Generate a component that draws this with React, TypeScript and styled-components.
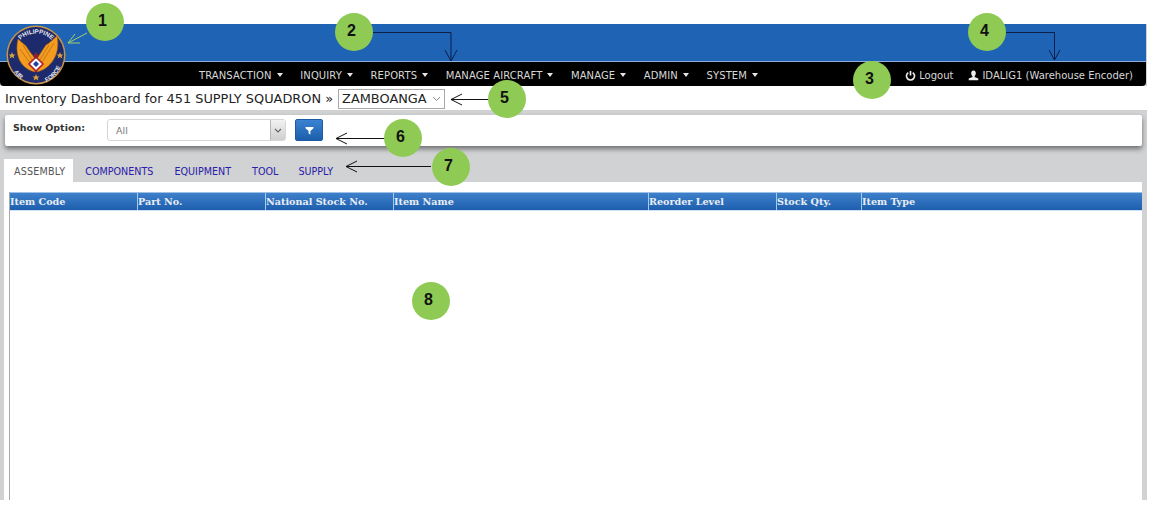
import React from "react";
import styled, { createGlobalStyle } from "styled-components";

const Global = createGlobalStyle`
  html, body { margin: 0; padding: 0; background: #fff; }
  body { font-family: "DejaVu Sans", Verdana, sans-serif; overflow: hidden; }
`;

const Page = styled.div`
  position: relative;
  width: 1149px;
  height: 513px;
  background: #fff;
  padding-top: 24px;
  box-sizing: border-box;
  overflow: hidden;
`;
const Frame = styled.div`
  width: 1147px;
  height: 476px;
  background: #d1d2d4;
  display: flex;
  flex-direction: column;
`;
const Banner = styled.div`
  height: 38px;
  background: #1f63b5;
  border-bottom: 1px solid #8fb0d8;
  box-sizing: border-box;
  margin-right: 1px;
`;
const NavBar = styled.nav`
  height: 24px;
  background: #000;
  border-radius: 0 0 4px 4px;
  margin-right: 1px;
  display: flex;
  align-items: center;
  justify-content: space-between;
  padding: 2px 13px 0 199px;
  box-sizing: border-box;
  font-size: 10px;
  color: #d8d8d8;
`;
const NavGroup = styled.div<{ $gap: number; $spacing?: number }>`
  display: flex;
  align-items: center;
  gap: ${(p) => p.$gap}px;
  letter-spacing: ${(p) => p.$spacing ?? 0}px;
`;
const NavItem = styled.span<{ $iconGap?: number }>`
  display: flex;
  align-items: center;
  gap: ${(p) => p.$iconGap ?? 5}px;
  white-space: nowrap;
`;
const Caret = styled.i`
  width: 0;
  height: 0;
  border-left: 3.5px solid transparent;
  border-right: 3.5px solid transparent;
  border-top: 4px solid #e6e6e6;
`;
const TitleRow = styled.div`
  height: 24px;
  background: #fff;
  display: flex;
  align-items: center;
  padding: 1px 0 0 5px;
  box-sizing: border-box;
  gap: 5px;
  font-size: 12.9px;
  color: #222;
  white-space: nowrap;
`;
const SiteSelect = styled.div`
  width: 107px;
  height: 20px;
  border: 1px solid #a9a9a9;
  box-sizing: border-box;
  display: flex;
  align-items: center;
  justify-content: space-between;
  padding: 0 3px;
  font-size: 12.9px;
  color: #222;
`;
const FilterCard = styled.div`
  height: 31px;
  margin: 5px 5px 0 5px;
  background: #fff;
  border-radius: 2px;
  box-shadow: 0 3px 5px rgba(60, 60, 60, 0.65);
  display: flex;
  align-items: flex-start;
  box-sizing: border-box;
  padding: 4px 0 0 8px;
`;
const FilterLabel = styled.span`
  width: 94px;
  font-size: 9.5px;
  font-weight: bold;
  color: #333;
  white-space: nowrap;
  padding-top: 3px;
`;
const OptionSelect = styled.div`
  width: 179px;
  height: 22px;
  border: 1px solid #d6d6d6;
  border-radius: 3px;
  box-sizing: border-box;
  display: flex;
  align-items: center;
  justify-content: space-between;
  padding-left: 8px;
  font-size: 9.5px;
  color: #777;
  background: #fff;
`;
const OptionArrow = styled.span`
  width: 14px;
  height: 20px;
  background: linear-gradient(#f2f2f2, #cfcfcf);
  border-left: 1px solid #b5b5b5;
  display: flex;
  align-items: center;
  justify-content: center;
`;
const FilterButton = styled.button`
  width: 28px;
  height: 22px;
  margin-left: 9px;
  border: 1px solid #1c5aa6;
  border-radius: 2px;
  background: linear-gradient(#3a83d2, #1c5eab);
  padding: 0;
  display: flex;
  align-items: center;
  justify-content: center;
`;
const TabStrip = styled.div`
  display: flex;
  align-items: stretch;
  height: 23px;
  margin: 13px 0 0 4px;
  font-size: 9.6px;
`;
const Tab = styled.span<{ $active?: boolean; $left: number; $right: number }>`
  display: flex;
  align-items: center;
  padding: 2px ${(p) => p.$right}px 0 ${(p) => p.$left}px;
  white-space: nowrap;
  color: ${(p) => (p.$active ? "#555" : "#2a20a8")};
  background: ${(p) => (p.$active ? "#fff" : "transparent")};
  letter-spacing: ${(p) => (p.$active ? 0.2 : 0)}px;
`;
const Panel = styled.div`
  flex: 1;
  margin: 0 5px 0 4px;
  background: #fff;
  padding: 10px 0 0 6px;
  display: flex;
`;
const TableBox = styled.div`
  flex: 1;
  border-left: 1px solid #a8a8a8;
  margin-left: -1px;
`;
const HeadRow = styled.div`
  height: 19px;
  display: flex;
  background: linear-gradient(#3f80cb, #1d5fae);
  border-top: 1px solid #9fc0e6;
  border-bottom: 1px solid #cfe0f2;
  box-sizing: border-box;
`;
const HeadCell = styled.div<{ $w?: number }>`
  ${(p) => (p.$w ? `width: ${p.$w}px;` : "flex: 1;")}
  box-sizing: border-box;
  border-left: 1px solid #a9c8ea;
  font-family: "DejaVu Serif", serif;
  font-size: 9.6px;
  font-weight: bold;
  color: #e8eef6;
  line-height: 17px;
  white-space: nowrap;
  &:first-child { border-left: 0; }
`;
const Callout = styled.div<{ $x: number; $y: number }>`
  position: absolute;
  left: ${(p) => p.$x - 19}px;
  top: ${(p) => p.$y - 19}px;
  width: 38px;
  height: 38px;
  padding: 0 5px 2px 0;
  box-sizing: border-box;
  border-radius: 50%;
  background: #8fcb54;
  display: flex;
  align-items: center;
  justify-content: center;
  font-family: "Liberation Sans", Arial, sans-serif;
  font-size: 16px;
  font-weight: bold;
  color: #111;
`;
const Overlay = styled.svg`
  position: absolute;
  left: 0;
  top: 0;
  pointer-events: none;
`;
const LogoSvg = styled.svg`
  position: absolute;
  left: 6px;
  top: 25px;
`;

const navLeft = ["TRANSACTION", "INQUIRY", "REPORTS", "MANAGE AIRCRAFT", "MANAGE", "ADMIN", "SYSTEM"];
const tabs = [
  { label: "COMPONENTS", left: 12, right: 10 },
  { label: "EQUIPMENT", left: 11, right: 10 },
  { label: "TOOL", left: 11, right: 10 },
  { label: "SUPPLY", left: 10, right: 10 },
];
const cols = [
  { label: "Item Code", w: 127 },
  { label: "Part No.", w: 128 },
  { label: "National Stock No.", w: 128 },
  { label: "Item Name", w: 255 },
  { label: "Reorder Level", w: 128 },
  { label: "Stock Qty.", w: 85 },
  { label: "Item Type" },
];
const callouts: [string, number, number][] = [
  ["1", 105, 22],
  ["2", 354, 32],
  ["3", 872, 80],
  ["4", 987, 32],
  ["5", 507, 99],
  ["6", 403, 138],
  ["7", 451, 167],
  ["8", 431, 301],
];

const Logo = () => (
  <LogoSvg width="60" height="60" viewBox="0 0 60 60">
    <defs>
      <path id="arcTop" d="M9 37 A22 22 0 1 1 51 37" />
      <path id="arcBot" d="M4 33 A26 26 0 0 0 56 33" />
    </defs>
    <circle cx="30" cy="30" r="29.5" fill="#c8954a" />
    <circle cx="30" cy="30" r="28" fill="#1d2a6b" />
    <text fontFamily="Liberation Sans, sans-serif" fontSize="6.2" fontWeight="bold" fill="#e8e8f0">
      <textPath href="#arcTop" startOffset="50%" textAnchor="middle">PHILIPPINE</textPath>
    </text>
    <text fontFamily="Liberation Sans, sans-serif" fontSize="6" fontWeight="bold" fill="#e8e8f0">
      <textPath href="#arcBot" startOffset="24%" textAnchor="middle">AIR</textPath>
    </text>
    <text fontFamily="Liberation Sans, sans-serif" fontSize="6" fontWeight="bold" fill="#e8e8f0">
      <textPath href="#arcBot" startOffset="76%" textAnchor="middle">FORCE</textPath>
    </text>
    <path d="M29 47 C16 44 8 32 12 14 C15 17 18 19 20 21 C22 24 26 30 30 34 Z" fill="#f39c1f" stroke="#a8600f" strokeWidth="0.6" />
    <path d="M31 47 C44 44 55 30 51 11 C47 14 44 18 40 20 C37 24 34 30 30 34 Z" fill="#f39c1f" stroke="#a8600f" strokeWidth="0.6" />
    <path d="M14 24 L27 42 M17 20 L28 38 M48 18 L33 42 M43 20 L32 38" stroke="#b86d12" strokeWidth="0.8" />
    <path d="M30 32 L37 39 L30 46 L23 39 Z" fill="#fff" stroke="#b02030" strokeWidth="1.6" />
    <path d="M30 36 L33 39 L30 42 L27 39 Z" fill="#2440a0" />
    <path d="M27 31 L30 27 L33 31 L30 34 Z" fill="#8b2030" />
    <g fill="#d8a040">
      <path d="M5 28 l1 2.4 2.6 0 -2 1.6 .8 2.5 -2.4 -1.5 -2.4 1.5 .8 -2.5 -2 -1.6 2.6 0 Z" transform="translate(1 -1)" />
      <path d="M55 28 l1 2.4 2.6 0 -2 1.6 .8 2.5 -2.4 -1.5 -2.4 1.5 .8 -2.5 -2 -1.6 2.6 0 Z" transform="translate(-1 -1)" />
      <path d="M30 49 l1 2.4 2.6 0 -2 1.6 .8 2.5 -2.4 -1.5 -2.4 1.5 .8 -2.5 -2 -1.6 2.6 0 Z" />
    </g>
  </LogoSvg>
);

const Arrows = () => (
  <Overlay width="1149" height="513" viewBox="0 0 1149 513" fill="none">
    <g stroke="#9fd070" strokeWidth="1">
      <path d="M87 33 L68 43 M68 43 L80 43 M68 43 L75 34" />
    </g>
    <g stroke="#0c1f4a" strokeWidth="1">
      <path d="M373 32.5 H451 V61 M445 50 L451 61 L457 50" />
      <path d="M1006 32.5 H1054.5 V60 M1049 50 L1054.5 60 L1060 50" />
    </g>
    <g stroke="#111" strokeWidth="1">
      <path d="M489 99.5 H451 M462 94 L451 99.5 L462 105" />
      <path d="M384 138.5 H336 M347 133 L336 138.5 L347 144" />
      <path d="M431 166.5 H346 M357 161 L346 166.5 L357 172" />
    </g>
  </Overlay>
);

export default function App() {
  return (
    <Page>
      <Global />
      <Frame>
        <Banner />
        <NavBar>
          <NavGroup $gap={17.6} $spacing={0.1}>
            {navLeft.map((n) => (
              <NavItem key={n}>
                {n}
                <Caret />
              </NavItem>
            ))}
          </NavGroup>
          <NavGroup $gap={15}>
            <NavItem $iconGap={3}>
              <svg width="11" height="11" viewBox="0 0 12 12" fill="none" stroke="#eee" strokeWidth="1.8">
                <path d="M3.6 2.8 A4.4 4.4 0 1 0 8.4 2.8" />
                <path d="M6 1 V6" />
              </svg>
              Logout
            </NavItem>
            <NavItem $iconGap={3}>
              <svg width="11" height="11" viewBox="0 0 12 12" fill="#eee">
                <path d="M6 0.5 C7.8 0.5 8.7 2 8.5 3.8 C8.4 5.2 7.6 6.4 7.2 6.8 L7.2 7.6 L11.2 9.4 V11.2 H0.8 V9.4 L4.8 7.6 L4.8 6.8 C4.4 6.4 3.6 5.2 3.5 3.8 C3.3 2 4.2 0.5 6 0.5 Z" />
              </svg>
              IDALIG1 (Warehouse Encoder)
            </NavItem>
          </NavGroup>
        </NavBar>
        <TitleRow>
          Inventory Dashboard for 451 SUPPLY SQUADRON »
          <SiteSelect>
            ZAMBOANGA
            <svg width="9" height="6" viewBox="0 0 9 6" fill="none" stroke="#888">
              <path d="M1 1 L4.5 4.5 L8 1" />
            </svg>
          </SiteSelect>
        </TitleRow>
        <FilterCard>
          <FilterLabel>Show Option:</FilterLabel>
          <OptionSelect>
            All
            <OptionArrow>
              <svg width="8" height="5" viewBox="0 0 8 5" fill="none" stroke="#666" strokeWidth="1.2">
                <path d="M1 1 L4 4 L7 1" />
              </svg>
            </OptionArrow>
          </OptionSelect>
          <FilterButton aria-label="Filter">
            <svg width="9" height="9" viewBox="0 0 9 9" fill="#fff">
              <path d="M0.5 1 H8.5 V2.2 L5.4 5 V8.5 L3.6 7.5 V5 L0.5 2.2 Z" />
            </svg>
          </FilterButton>
        </FilterCard>
        <TabStrip>
          <Tab $active $left={10} $right={8}>ASSEMBLY</Tab>
          {tabs.map((t) => (
            <Tab key={t.label} $left={t.left} $right={t.right}>{t.label}</Tab>
          ))}
        </TabStrip>
        <Panel>
          <TableBox>
            <HeadRow>
              {cols.map((c) => (
                <HeadCell key={c.label} $w={c.w}>{c.label}</HeadCell>
              ))}
            </HeadRow>
          </TableBox>
        </Panel>
      </Frame>
      <Logo />
      <Arrows />
      {callouts.map(([n, x, y]) => (
        <Callout key={n} $x={x} $y={y}>{n}</Callout>
      ))}
    </Page>
  );
}
